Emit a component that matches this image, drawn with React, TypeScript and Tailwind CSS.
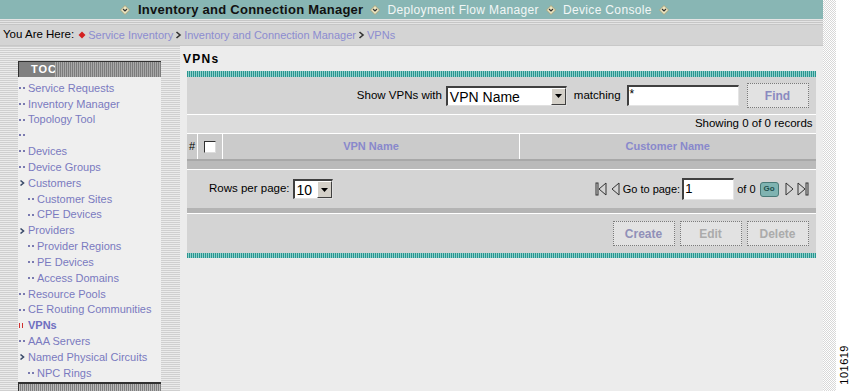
import React from "react";

const F = "font-['Liberation_Sans',Arial,sans-serif]";

function NavDiamond({ cls = "mx-[6px]" }: { cls?: string }) {
  return (
    <svg width="10" height="10" viewBox="0 0 10 10" className={`${cls} shrink-0`}>
      <polygon points="5,0.5 9.5,5 5,9.5 0.5,5" fill="#ede6c2" stroke="#a9a070" strokeWidth="0.8" />
      <path d="M3,4 L5,6 L7,4" fill="none" stroke="#333" strokeWidth="1.2" />
    </svg>
  );
}

function Crumb() {
  return (
    <svg width="7" height="8" viewBox="0 0 7 8" className="mx-[2px] shrink-0">
      <path d="M1.5,1 L5,4 L1.5,7" fill="none" stroke="#333" strokeWidth="1.6" />
    </svg>
  );
}

function Dots({ color = "#7a7ab0" }: { color?: string }) {
  return (
    <span className="inline-flex gap-[2px] items-center w-[8px] shrink-0">
      <span className="w-[2px] h-[2px]" style={{ background: color }} />
      <span className="w-[2px] h-[2px]" style={{ background: color }} />
    </span>
  );
}

function Arrow() {
  return (
    <svg width="8" height="8" viewBox="0 0 8 8" className="shrink-0">
      <path d="M1.5,1.5 L4.5,4 L1.5,6.5" fill="none" stroke="#3a4a6a" strokeWidth="1.6" />
    </svg>
  );
}

function RedBars() {
  return (
    <span className="inline-flex gap-[2px] items-center w-[8px] shrink-0">
      <span className="w-[1px] h-[5px] bg-[#d03030]" />
      <span className="w-[1px] h-[5px] bg-[#d03030]" />
    </span>
  );
}

type Item = { t: string; sub?: boolean; kind?: "dots" | "arrow" | "red"; bold?: boolean };
const items: Item[] = [
  { t: "Service Requests" },
  { t: "Inventory Manager" },
  { t: "Topology Tool" },
  { t: "" },
  { t: "Devices" },
  { t: "Device Groups" },
  { t: "Customers", kind: "arrow" },
  { t: "Customer Sites", sub: true },
  { t: "CPE Devices", sub: true },
  { t: "Providers", kind: "arrow" },
  { t: "Provider Regions", sub: true },
  { t: "PE Devices", sub: true },
  { t: "Access Domains", sub: true },
  { t: "Resource Pools" },
  { t: "CE Routing Communities" },
  { t: "VPNs", kind: "red", bold: true },
  { t: "AAA Servers" },
  { t: "Named Physical Circuits", kind: "arrow" },
  { t: "NPC Rings", sub: true },
];

function SelectBox({ value, w }: { value: string; w: string }) {
  return (
    <div className={`${w} h-[20px] bg-white flex items-stretch border-t-2 border-l-2 border-[#404040] border-b border-r border-b-[#e0e0e0] border-r-[#e0e0e0]`}>
      <span className="flex-1 text-[14px] leading-[18px] pl-[2px] text-black">{value}</span>
      <span className="w-[15px] bg-[#d4d0c8] border-t border-l border-white border-b border-r border-b-[#404040] border-r-[#404040] flex items-center justify-center">
        <svg width="7" height="4" viewBox="0 0 7 4"><polygon points="0,0 7,0 3.5,4" fill="#000" /></svg>
      </span>
    </div>
  );
}

function Btn({ label, color }: { label: string; color: string }) {
  return (
    <div
      className={`w-[62px] h-[25px] bg-[#e2e2e2] border border-dotted border-[#7a7a7a] flex items-center justify-center text-[12px] font-bold ${color}`}
    >
      {label}
    </div>
  );
}

function Tri({ dir }: { dir: "l" | "r" }) {
  return (
    <svg width="9" height="14" viewBox="0 0 9 14" className="shrink-0">
      {dir === "l" ? (
        <polygon points="8,1 1,7 8,13" fill="none" stroke="#333" strokeWidth="1" />
      ) : (
        <polygon points="1,1 8,7 1,13" fill="none" stroke="#333" strokeWidth="1" />
      )}
    </svg>
  );
}

export default function App() {
  const stripesH =
    "bg-[repeating-linear-gradient(180deg,#cfcfcf_0px,#cfcfcf_1px,#ebebeb_1px,#ebebeb_2px)]";
  const tealStripe =
    "bg-[repeating-linear-gradient(90deg,#2a958f_0px,#2a958f_1px,#8fd0cc_1px,#8fd0cc_2px)]";
  return (
    <div className={`w-[852px] h-[391px] overflow-hidden flex bg-white ${F}`}>
      {/* main column */}
      <div className="w-[825px] flex flex-col bg-[#ececec]">
        {/* top nav */}
        <div className="h-[19px] bg-[#88b6b4] flex items-center pl-[120px]">
          <NavDiamond cls="mr-[8px]" />
          <span className="text-[13px] font-bold tracking-[0.25px] text-[#111] leading-none whitespace-nowrap">
            Inventory and Connection Manager
          </span>
          <NavDiamond cls="mx-[7px]" />
          <span className="text-[12px] tracking-[0.35px] text-[#f2f6f6] leading-none whitespace-nowrap">Deployment Flow Manager</span>
          <NavDiamond cls="mx-[7px]" />
          <span className="text-[12px] tracking-[0.35px] text-[#f2f6f6] leading-none whitespace-nowrap">Device Console</span>
          <NavDiamond cls="mx-[7px]" />
        </div>
        <div className="h-[6px] bg-[repeating-linear-gradient(180deg,#e4e4e4_0px,#e4e4e4_1px,#c6c6c6_1px,#c6c6c6_2px)]" />
        {/* breadcrumb */}
        <div className="h-[21px] bg-[#d4d4d4] border-b border-[#c8c8c8] flex items-center pl-[3px] text-[11px]">
          <span className="text-black text-[11.5px]">You Are Here:</span>
          <svg width="8" height="8" viewBox="0 0 8 8" className="ml-[4px] mr-[2px]">
            <polygon points="4,0.5 7.5,4 4,7.5 0.5,4" fill="#d42020" />
          </svg>
          <span className="text-[#8c8cd0]">Service Inventory</span>
          <Crumb />
          <span className="text-[#8c8cd0]">Inventory and Connection Manager</span>
          <Crumb />
          <span className="text-[#8c8cd0]">VPNs</span>
        </div>
        {/* body */}
        <div className="flex-1 flex min-h-0">
          {/* sidebar */}
          <div className={`w-[180px] ${stripesH} pt-[15px] pl-[18px] flex flex-col`}>
            <div className="w-[143px] flex-1 flex flex-col bg-[#efefef]">
              <div className="h-[16px] flex border-t border-l border-[#303030] bg-[#808080]">
                <span className="pl-[12px] w-[36px] text-white font-bold text-[11px] leading-[15px] tracking-[1px]">TOC</span>
                <div className="flex-1 bg-[repeating-linear-gradient(90deg,#a8a8a8_0px,#a8a8a8_1px,#7c7c7c_1px,#7c7c7c_2px)]" />
              </div>
              <div className="flex flex-col pt-[3px]">
                {items.map((it, i) => (
                  <div
                    key={i}
                    className={`h-[15.85px] flex items-center ${it.sub ? "pl-[10px]" : "pl-[1px]"} text-[11px] ${
                      it.bold ? "font-bold text-[#6e6ec0]" : "text-[#7a7ac0]"
                    }`}
                  >
                    {it.kind === "arrow" ? <Arrow /> : it.kind === "red" ? <RedBars /> : <Dots />}
                    <span className="ml-[1px] whitespace-nowrap">{it.t}</span>
                  </div>
                ))}
              </div>
              <div className="mt-auto h-[9px] border-t-2 border-l border-[#303030] bg-[repeating-linear-gradient(90deg,#b8b8b8_0px,#b8b8b8_1px,#808080_1px,#808080_2px)]" />
            </div>
          </div>
          {/* content */}
          <div className="flex-1 flex flex-col pl-[3px] pr-[7px]">
            <div className="h-[25px] pt-[4px] text-[12px] font-bold tracking-[1.3px] text-black">VPNs</div>
            <div className="ml-[4px] flex flex-col bg-[#d4d4d4]">
              <div className={`h-[6px] ${tealStripe}`} />
              {/* filter row */}
              <div className="h-[37px] flex items-center justify-end pr-[7px] text-[11.5px] text-black">
                <span className="mr-[4px]">Show VPNs with</span>
                <SelectBox value="VPN Name" w="w-[121px]" />
                <span className="ml-[7px] mr-[6px]">matching</span>
                <div className="w-[112px] h-[21px] bg-white border-t-2 border-l-2 border-[#404040] border-b border-r border-b-[#e4e4e4] border-r-[#e4e4e4] text-[12px] leading-[15px] pl-[1px]">
                  *
                </div>
                <div className="ml-[8px]">
                  <Btn label="Find" color="text-[#8a8ac0]" />
                </div>
              </div>
              <div className="h-[1px] bg-white" />
              <div className="h-[18px] bg-[#dcdcdc] flex items-center justify-end pr-[3px] text-[11.5px] text-black">
                Showing 0 of 0 records
              </div>
              <div className="h-[1px] bg-white" />
              {/* header */}
              <div className="h-[25px] flex bg-[#cbcbcb] text-[11px] font-bold text-[#8888cc]">
                <div className="w-[10px] flex items-center pl-[2px] text-black font-normal text-[11px]">#</div>
                <div className="w-[1px] bg-white" />
                <div className="w-[24px] flex items-center justify-center">
                  <div className="w-[12px] h-[12px] bg-white border-t border-l border-[#303030] border-b border-r border-b-[#dcdcdc] border-r-[#dcdcdc]" />
                </div>
                <div className="w-[1px] bg-white" />
                <div className="w-[296px] flex items-center justify-center">VPN Name</div>
                <div className="w-[1px] bg-white" />
                <div className="flex-1 flex items-center justify-center">Customer Name</div>
              </div>
              <div className="h-[2px] bg-[#a8a8a8]" />
              <div className="h-[8px] bg-[#bababa]" />
              <div className="h-[1px] bg-white" />
              {/* pager row */}
              <div className="h-[38px] flex items-center text-[11.5px] text-black">
                <span className="ml-[22px] mr-[3px]">Rows per page:</span>
                <SelectBox value="10" w="w-[40px]" />
                <div className="ml-auto mr-[7px] flex items-center text-[11px]">
                  <svg width="12" height="14" viewBox="0 0 12 14" className="shrink-0">
                    <rect x="1" y="1" width="2" height="12" fill="none" stroke="#333" strokeWidth="1" />
                    <polygon points="11,1 4,7 11,13" fill="none" stroke="#333" strokeWidth="1" />
                  </svg>
                  <span className="ml-[4px]"><Tri dir="l" /></span>
                  <span className="ml-[3px] mr-[2px]">Go to page:</span>
                  <div className="w-[52px] h-[22px] bg-white border-t-2 border-l-2 border-[#404040] border-b border-r border-b-[#e4e4e4] border-r-[#e4e4e4] text-[13px] leading-[18px] pl-[1px]">
                    1
                  </div>
                  <span className="ml-[3px]">of 0</span>
                  <div className="ml-[4px] w-[19px] h-[15px] rounded-[3px] bg-[#7fb3b1] border border-[#4a7a78] flex items-center justify-center text-[8px] font-bold text-[#1f4f4d]">
                    Go
                  </div>
                  <span className="ml-[6px]"><Tri dir="r" /></span>
                  <svg width="12" height="14" viewBox="0 0 12 14" className="ml-[3px] shrink-0">
                    <polygon points="1,1 8,7 1,13" fill="none" stroke="#333" strokeWidth="1" />
                    <rect x="9" y="1" width="2" height="12" fill="none" stroke="#333" strokeWidth="1" />
                  </svg>
                </div>
              </div>
              <div className="h-[5px] bg-[#b4b4b4]" />
              <div className="h-[1px] bg-white" />
              {/* buttons */}
              <div className="h-[39px] flex items-center justify-end gap-[5px] pr-[7px]">
                <Btn label="Create" color="text-[#9090b8]" />
                <Btn label="Edit" color="text-[#ababab]" />
                <Btn label="Delete" color="text-[#ababab]" />
              </div>
              <div className={`h-[5px] ${tealStripe}`} />
            </div>
          </div>
        </div>
      </div>
      {/* dithered strip */}
      <div className="w-[13px] bg-[repeating-conic-gradient(#d8d8d8_0%_25%,#ffffff_0%_50%)] bg-[length:2px_2px]" />
      {/* label column */}
      <div className="flex-1 flex flex-col justify-end items-center pb-[6px]">
        <span className="[writing-mode:vertical-rl] rotate-180 text-[11px] text-black tracking-[0.5px]">101619</span>
      </div>
    </div>
  );
}
